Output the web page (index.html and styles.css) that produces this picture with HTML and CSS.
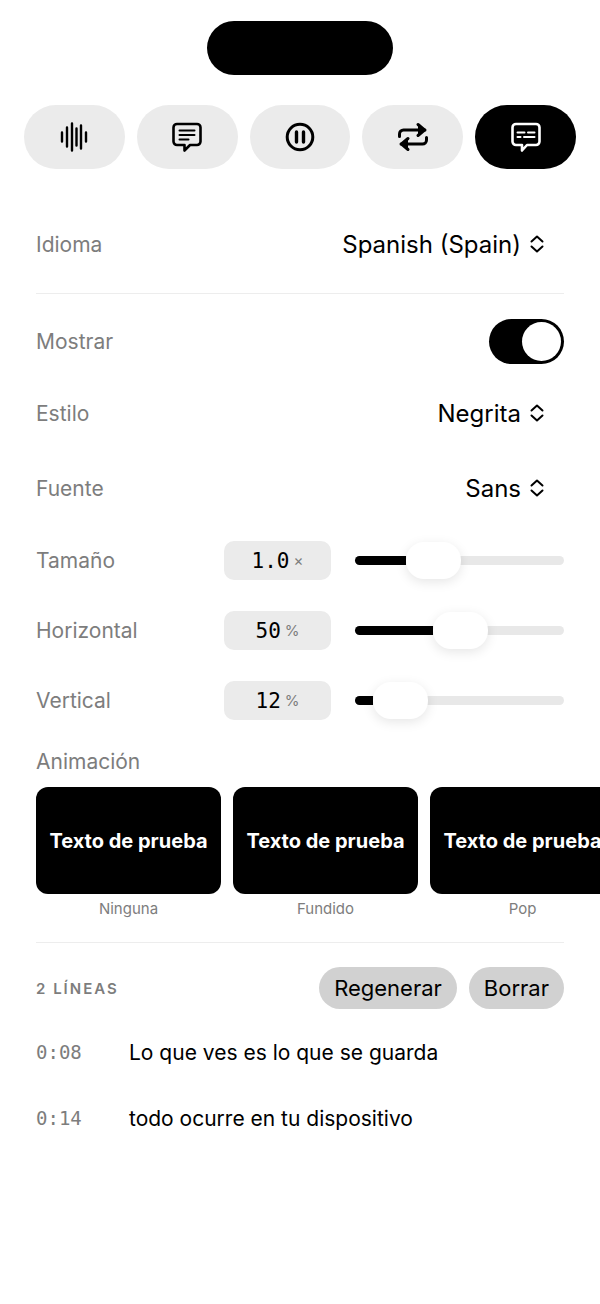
FILE: index.html
```html
<!DOCTYPE html>
<html lang="es">
<head>
    <meta charset="UTF-8">
    <meta name="viewport" content="width=device-width, initial-scale=1.0">
    <title>Subtítulos</title>
    <link rel="stylesheet" href="styles.css">
</head>
<body>
    <div class="island"></div>

    <div class="tabs">
        <button class="tab">
            <svg width="30" height="32" viewBox="0 0 30 32" fill="none" stroke="currentColor" stroke-width="2.4" stroke-linecap="round">
                <path d="M3 11.5v9M8 6.5v19M13 2.5v27M17.5 7.5v17M22 4.500v23M27 11.5v9"/>
            </svg>
        </button>
        <button class="tab">
            <svg width="32" height="32" viewBox="0 0 32 32" fill="none" stroke="currentColor" stroke-width="2.6" stroke-linejoin="round" stroke-linecap="round">
                <path d="M6 3h20a3.500 3.500 0 0 1 3.500 3.500v14a3.500 3.500 0 0 1-3.500 3.500h-7l-5.500 5.500v-5.500H6A3.500 3.500 0 0 1 2.500 20.500v-14A3.500 3.500 0 0 1 6 3z"/>
                <path d="M8.500 9.500h15M8.500 14h15M8.500 18.500h9" stroke-width="2"/>
            </svg>
        </button>
        <button class="tab">
            <svg width="30" height="30" viewBox="0 0 30 30" fill="none" stroke="currentColor" stroke-width="3">
                <circle cx="15" cy="15" r="12.800"/>
                <path d="M11.500 10v10M18.500 10v10" stroke-width="3.400" stroke-linecap="round"/>
            </svg>
        </button>
        <button class="tab">
            <svg width="32" height="30" viewBox="0 0 32 30" fill="none" stroke="currentColor" stroke-width="3" stroke-linecap="round" stroke-linejoin="round">
                <path d="M2.500 14.500V12a4 4 0 0 1 4-4H28"/>
                <path d="M21 2.500 27.500 8 21 13.500" fill="currentColor"/>
                <path d="M29.500 15.500V18a4 4 0 0 1-4 4H4"/>
                <path d="M11 16.500 4.500 22 11 27.500" fill="currentColor"/>
            </svg>
        </button>
        <button class="tab tab-active">
            <svg width="32" height="32" viewBox="0 0 32 32" fill="none" stroke="currentColor" stroke-width="2.600" stroke-linejoin="round" stroke-linecap="round">
                <path d="M6 3h20a3.500 3.500 0 0 1 3.500 3.500v14a3.500 3.500 0 0 1-3.500 3.500h-9l-5 5.500v-5.500H6A3.500 3.500 0 0 1 2.500 20.500v-14A3.500 3.500 0 0 1 6 3z"/>
                <path d="M7.500 11.500h7M18 11.500h6.500M7.500 16h3M14 16h10.500" stroke-width="2"/>
            </svg>
        </button>
    </div>

    <div class="settings">
        <div class="row row-language">
            <span class="label">Idioma</span>
            <span class="picker">Spanish (Spain)
                <svg class="chevrons" width="16" height="20" viewBox="0 0 16 20" fill="none" stroke="currentColor" stroke-width="2" stroke-linecap="round" stroke-linejoin="round"><path d="M2.500 7.500 8 2.500l5.500 5M2.500 12.500 8 17.500l5.500-5"/></svg>
            </span>
        </div>

        <div class="divider"></div>

        <div class="row row-toggle">
            <span class="label">Mostrar</span>
            <span class="toggle"><span class="toggle-knob"></span></span>
        </div>
        <div class="row row-style">
            <span class="label">Estilo</span>
            <span class="picker">Negrita
                <svg class="chevrons" width="16" height="20" viewBox="0 0 16 20" fill="none" stroke="currentColor" stroke-width="2" stroke-linecap="round" stroke-linejoin="round"><path d="M2.500 7.500 8 2.500l5.500 5M2.500 12.500 8 17.500l5.500-5"/></svg>
            </span>
        </div>
        <div class="row row-font">
            <span class="label">Fuente</span>
            <span class="picker">Sans
                <svg class="chevrons" width="16" height="20" viewBox="0 0 16 20" fill="none" stroke="currentColor" stroke-width="2" stroke-linecap="round" stroke-linejoin="round"><path d="M2.500 7.500 8 2.500l5.500 5M2.500 12.500 8 17.500l5.500-5"/></svg>
            </span>
        </div>

        <div class="row row-slider">
            <span class="label label-slider">Tamaño</span>
            <span class="chip">1.0<small>×</small></span>
            <div class="track"><div class="fill" style="width: 51px"></div><div class="thumb"></div></div>
        </div>
        <div class="row row-slider">
            <span class="label label-slider">Horizontal</span>
            <span class="chip">50<small>%</small></span>
            <div class="track"><div class="fill" style="width: 78px"></div><div class="thumb"></div></div>
        </div>
        <div class="row row-slider">
            <span class="label label-slider">Vertical</span>
            <span class="chip">12<small>%</small></span>
            <div class="track"><div class="fill" style="width: 18px"></div><div class="thumb"></div></div>
        </div>

        <div class="label label-anim">Animación</div>
        <div class="cards">
            <div class="card">
                <div class="card-box">Texto de prueba</div>
                <div class="card-name">Ninguna</div>
            </div>
            <div class="card">
                <div class="card-box">Texto de prueba</div>
                <div class="card-name">Fundido</div>
            </div>
            <div class="card">
                <div class="card-box">Texto de prueba</div>
                <div class="card-name">Pop</div>
            </div>
        </div>

        <div class="divider divider-lines"></div>

        <div class="lines-head">
            <span class="lines-count">2 LÍNEAS</span>
            <div class="lines-actions">
                <button class="pill">Regenerar</button>
                <button class="pill">Borrar</button>
            </div>
        </div>

        <div class="line">
            <span class="line-time">0:08</span>
            <span class="line-text">Lo que ves es lo que se guarda</span>
        </div>
        <div class="line">
            <span class="line-time">0:14</span>
            <span class="line-text">todo ocurre en tu dispositivo</span>
        </div>
    </div>
</body>
</html>
```

FILE: styles.css
```css
html, body {
    height: 100%;
    overflow: hidden;
}

body {
    margin: 0;
    background-color: #fff;
    color: #000;
    font-family: Inter, "Noto Sans", sans-serif;
    font-size: 22px;
}

button {
    font-family: inherit;
    border: none;
    padding: 0;
}

.island {
    width: 186px;
    height: 54px;
    margin: 21px auto 0;
    background-color: #000;
    border-radius: 27px;
}

.tabs {
    display: grid;
    grid-template-columns: repeat(5, 1fr);
    gap: 12px;
    margin: 30px 24px 0;
}

.tab {
    height: 64px;
    border-radius: 32px;
    background-color: #ebebeb;
    color: #000;
    display: flex;
    align-items: center;
    justify-content: center;
}

.tab-active {
    background-color: #000;
    color: #fff;
}

.settings {
    padding: 0 36px;
}

.row {
    display: flex;
    align-items: center;
    justify-content: space-between;
}

.label {
    color: #7d7d7d;
    font-size: 21px;
}

.row-language {
    height: 40px;
    margin-top: 55px;
}

.picker {
    display: flex;
    align-items: center;
    gap: 8px;
    font-size: 24px;
    padding-right: 19px;
}

.divider {
    height: 1px;
    background-color: #ededed;
}

.row-language + .divider {
    margin-top: 29px;
}

.row-toggle {
    height: 46px;
    margin-top: 24px;
}

.toggle {
    width: 75px;
    height: 45px;
    box-sizing: border-box;
    padding: 3px;
    background-color: #000;
    border-radius: 23px;
    display: flex;
    justify-content: flex-end;
}

.toggle-knob {
    width: 39px;
    height: 39px;
    background-color: #fff;
    border-radius: 50%;
}

.row-style {
    height: 40px;
    margin-top: 29px;
}

.row-font {
    height: 40px;
    margin-top: 35px;
}

.row-slider {
    height: 39px;
    margin-bottom: 31px;
    justify-content: flex-start;
}

.row-font + .row-slider {
    margin-top: 33px;
}

.label-slider {
    width: 188px;
}

.chip {
    width: 107px;
    height: 39px;
    background-color: #ebebeb;
    border-radius: 10px;
    display: flex;
    align-items: center;
    justify-content: center;
    gap: 4px;
    font-family: "DejaVu Sans Mono", monospace;
    font-size: 21px;
    font-weight: 500;
}

.chip small {
    color: #7d7d7d;
    font-family: Inter, sans-serif;
    font-size: 15px;
    font-weight: 400;
}

.track {
    display: flex;
    align-items: center;
    width: 209px;
    height: 9px;
    margin-left: 24px;
    background-color: #e8e8e8;
    border-radius: 5px;
}

.fill {
    height: 9px;
    background-color: #000;
    border-radius: 5px 0 0 5px;
}

.thumb {
    flex: none;
    width: 55px;
    height: 37px;
    background-color: #fff;
    border-radius: 18px;
    box-shadow: 0 3px 12px rgba(0, 0, 0, 0.1);
}

.label-anim {
    margin-top: -2px;
    line-height: 26px;
}

.cards {
    display: flex;
    gap: 12px;
    margin: 12px -36px 0 0;
}

.card {
    flex: none;
    width: 185px;
}

.card-box {
    height: 107px;
    background-color: #000;
    border-radius: 12px;
    color: #fff;
    font-size: 20px;
    font-weight: 700;
    display: flex;
    align-items: center;
    justify-content: center;
    white-space: nowrap;
}

.card-name {
    margin-top: 6px;
    color: #7d7d7d;
    font-size: 15px;
    line-height: 18px;
    text-align: center;
}

.divider-lines {
    margin-top: 24px;
}

.lines-head {
    display: flex;
    align-items: center;
    justify-content: space-between;
    margin-top: 24px;
}

.lines-count {
    color: #7d7d7d;
    font-size: 15px;
    font-weight: 600;
    letter-spacing: 2px;
}

.lines-actions {
    display: flex;
    gap: 12px;
}

.pill {
    height: 42px;
    padding: 0 15px;
    background-color: #d1d1d1;
    border-radius: 21px;
    color: #000;
    font-size: 22px;
}

.line {
    display: flex;
    align-items: center;
    height: 30px;
    margin-top: 36px;
}

.lines-head + .line {
    margin-top: 28px;
}

.line-time {
    width: 93px;
    color: #7d7d7d;
    font-family: "DejaVu Sans Mono", monospace;
    font-size: 19px;
}

.line-text {
    font-size: 21px;
}
```
